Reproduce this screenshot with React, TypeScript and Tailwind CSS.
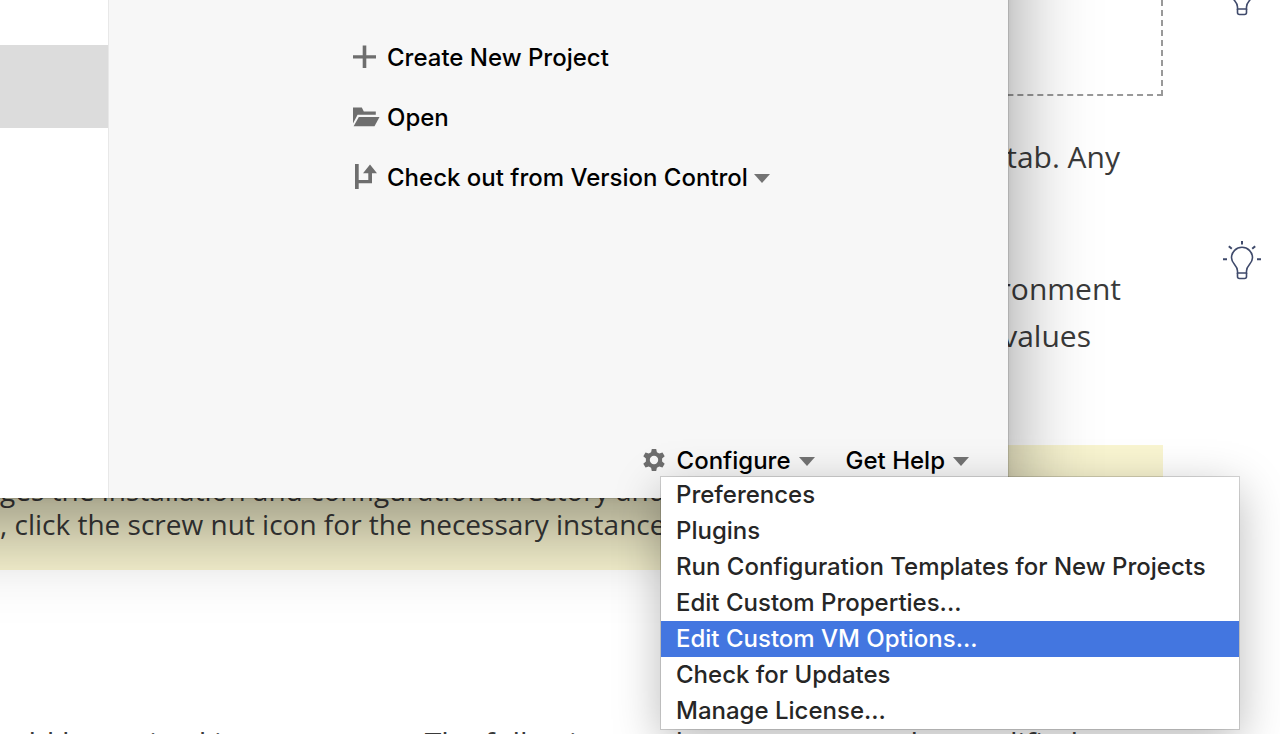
import React from "react";

const menuItems = [
  "Preferences",
  "Plugins",
  "Run Configuration Templates for New Projects",
  "Edit Custom Properties...",
  "Edit Custom VM Options...",
  "Check for Updates",
  "Manage License...",
];

function Bulb() {
  return (
    <svg viewBox="0 0 40 40" className="h-10 w-10" fill="none" stroke="#3f4a6b" strokeWidth="1.6">
      <path d="M15.500 33V31C15.500 25 9.500 24 9.500 17.800a10.500 10.500 0 0 1 21 0C30.500 24 24.500 25 24.500 31v2z" />
      <path d="M15.500 33v3.500q0 2 2 2h5q2 0 2-2V33" />
      <path d="M20 1v3.600M6.800 6.200l3 2.600M33.200 6.200l-3 2.600M1 19.300h4M35 19.300h4" strokeWidth="2" />
    </svg>
  );
}

function Caret() {
  return (
    <svg viewBox="0 0 16 9" className="h-[9px] w-4" fill="#737373">
      <path d="M0 0h16L8 9z" />
    </svg>
  );
}

function PlusIcon() {
  return (
    <svg viewBox="0 0 28 28" className="h-7 w-7" fill="#6e6e6e">
      <path d="M9.700 1.500h3.600v9.700H23v3.200h-9.700V24H9.700v-9.600H0v-3.200h9.700z" />
    </svg>
  );
}

function FolderIcon() {
  return (
    <svg viewBox="0 0 28 28" className="h-7 w-7" fill="#6e6e6e">
      <path d="M0 3.600h8.800l2 4H22.800v3.200H4.600L0 19.500z" />
      <path d="M5.800 13h20.700l-5 9.300H.6z" />
    </svg>
  );
}

function BranchIcon() {
  return (
    <svg viewBox="0 0 28 28" className="h-7 w-7" fill="#6e6e6e">
      <path d="M2 0h3.700v16h9.600V9.300H10L17 .600l7 8.700h-5V19.300H5.700V25H2z" />
    </svg>
  );
}

function GearIcon() {
  return (
    <svg viewBox="0 0 24 24" className="h-6 w-6" fill="#6e6e6e" fillRule="evenodd">
      <path d="M9.800 0h4.400l.7 3.300 2.300 1.300 3.300-1.100 2.200 3.800-2.600 2.300v2.800l2.600 2.300-2.200 3.800-3.300-1.100-2.300 1.300-.7 3.300H9.800l-.7-3.300-2.300-1.300-3.300 1.100-2.200-3.800 2.600-2.300V9.600L1.300 7.300l2.200-3.800 3.300 1.100 2.300-1.300zM12 6.800a4.200 4.200 0 1 0 0 8.400 4.200 4.200 0 0 0 0-8.400z" />
    </svg>
  );
}

function Article() {
  return (
    <div className="flex font-['Open_Sans','Noto_Sans',sans-serif] text-[30px] leading-[47px] text-[#3a3a3a]">
      <main className="min-w-0 flex-1 text-right whitespace-nowrap">
        <div className="h-24 border-r-2 border-b-2 border-dashed border-[#999]" />
        <p className="mt-[37px] pr-[43px]">tab. Any</p>
        <p className="mt-[85px] pr-[42px]">ironment</p>
        <p className="pr-[72px]">values</p>
        <div className="mt-[86px] h-[125px] bg-[#f9f5d1] pt-7 text-left text-[28px] leading-[34px]">
          <p>ges the installation and configuration directory and</p>
          <p>, click the screw nut icon for the necessary instance</p>
        </div>
        <p className="mt-[149px] pl-[10px] text-left">
          uld be revised in some cases. The following mode resources can be modified
        </p>
      </main>
      <aside className="flex w-[117px] flex-col items-center gap-56 pl-[41px]">
        <div className="-mt-6"><Bulb /></div>
        <Bulb />
      </aside>
    </div>
  );
}

function WelcomeWindow() {
  return (
    <section className="absolute -top-40 -left-40 flex h-[658px] w-[1168px] bg-[#f7f7f7] pt-40 pl-40 shadow-[0_0_0_1px_rgba(0,0,0,0.1),0_0_6px_rgba(0,0,0,0.06),0_28px_80px_rgba(0,0,0,0.42)]">
      <div className="-mt-40 -ml-40 w-[269px] shrink-0 border-r border-[#e8e8e8] bg-white pt-[205px]">
        <div className="h-[83px] bg-[#dcdcdc]" />
      </div>
      <div className="flex flex-1 flex-col justify-between font-medium text-black">
        <nav className="flex flex-col items-start gap-6 pt-10 pl-[244px]">
          <button className="flex h-9 items-center gap-[6px]"><PlusIcon />Create New Project</button>
          <button className="flex h-9 items-center gap-[6px]"><FolderIcon />Open</button>
          <button className="flex h-9 items-center gap-[6px]">
            <BranchIcon />Check out from Version Control<Caret />
          </button>
        </nav>
        <div className="flex justify-end gap-[31px] pr-[39px] pb-[19px]">
          <button className="flex h-9 items-center gap-2" aria-expanded="true">
            <span className="pr-[3px]"><GearIcon /></span>Configure<Caret />
          </button>
          <button className="flex h-9 items-center gap-2">Get Help<Caret /></button>
        </div>
      </div>
    </section>
  );
}

export default function App() {
  return (
    <div className="relative h-screen overflow-hidden bg-white font-['Inter',sans-serif] text-[24px] leading-9">
      <Article />
      <WelcomeWindow />
      <ul
        role="menu"
        className="absolute top-[477px] left-[661px] w-[578px] bg-white font-medium text-[#262626] shadow-[0_0_0_1px_rgba(0,0,0,0.15),0_12px_44px_rgba(0,0,0,0.28)]"
      >
        {menuItems.map((item) => (
          <li key={item} role="none">
            <button
              role="menuitem"
              className={
                item === "Edit Custom VM Options..."
                  ? "h-9 w-full bg-[#4376e0] pl-[15px] text-left text-white"
                  : "h-9 w-full pl-[15px] text-left"
              }
            >
              {item}
            </button>
          </li>
        ))}
      </ul>
    </div>
  );
}
